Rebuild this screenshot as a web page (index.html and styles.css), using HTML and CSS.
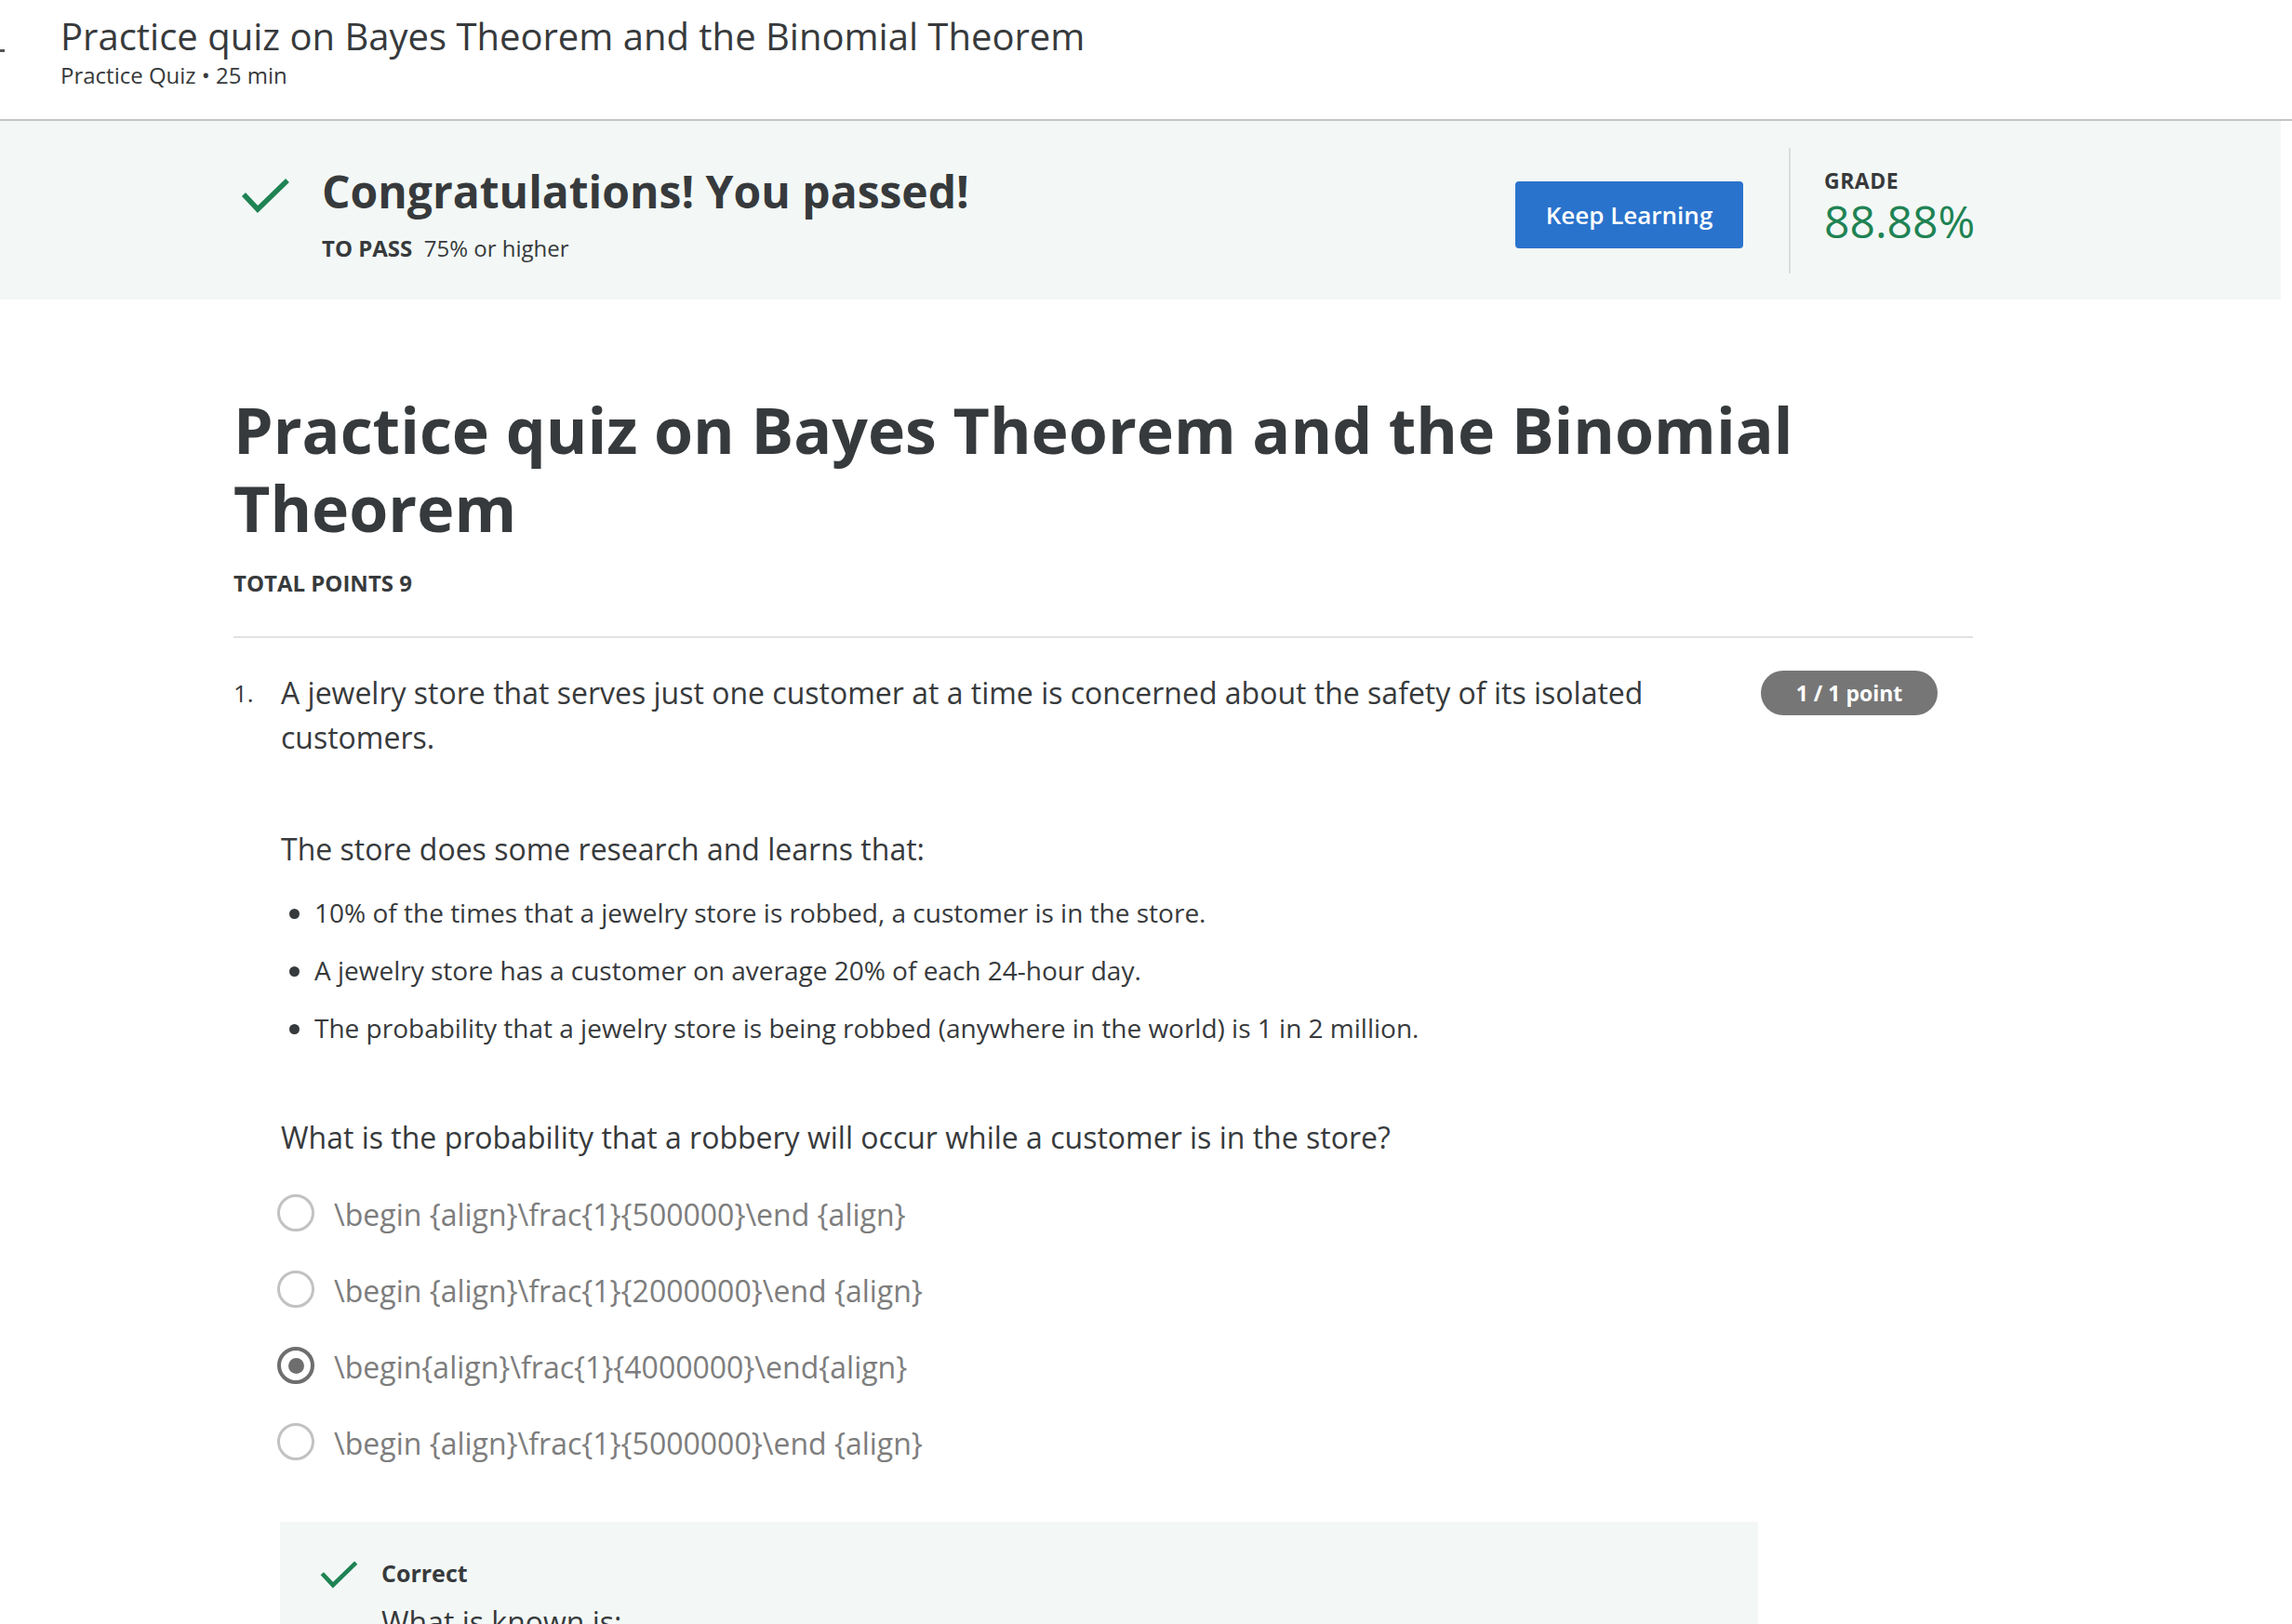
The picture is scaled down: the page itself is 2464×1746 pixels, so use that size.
FILE: index.html
```html
<!DOCTYPE html>
<html lang="en">
<head>
<meta charset="utf-8">
<title>Practice quiz on Bayes Theorem and the Binomial Theorem</title>
<link rel="stylesheet" href="styles.css">
</head>
<body>
<header class="topbar">
  <span class="back-mark"></span>
  <div class="topbar-text">
    <div class="topbar-title">Practice quiz on Bayes Theorem and the Binomial Theorem</div>
    <div class="topbar-sub">Practice Quiz • 25 min</div>
  </div>
</header>

<section class="banner">
  <div class="banner-inner">
    <svg class="banner-check" viewBox="0 0 53 40" width="53" height="40" aria-hidden="true">
      <polyline points="3,19 18,35 50,4" fill="none" stroke="#1f8354" stroke-width="5.5"/>
    </svg>
    <div class="banner-text">
      <div class="banner-title">Congratulations! You passed!</div>
      <div class="banner-pass"><b>TO PASS</b>&nbsp; 75% or higher</div>
    </div>
    <button class="btn-keep">Keep Learning</button>
    <div class="grade">
      <div class="grade-label">GRADE</div>
      <div class="grade-value">88.88%</div>
    </div>
  </div>
</section>

<main class="content">
  <h1 class="quiz-title">Practice quiz on Bayes Theorem and the Binomial Theorem</h1>
  <div class="total-points">TOTAL POINTS 9</div>
  <hr class="rule">

  <div class="question">
    <div class="q-num">1.</div>
    <div class="q-body">
      <div class="q-row">
        <p class="q-text">A jewelry store that serves just one customer at a time is concerned about the safety of its isolated customers.</p>
        <span class="badge">1 / 1 point</span>
      </div>
      <p class="q-para">The store does some research and learns that:</p>
      <ul class="facts">
        <li>10% of the times that a jewelry store is robbed, a customer is in the store.</li>
        <li>A jewelry store has a customer on average 20% of each 24-hour day.</li>
        <li>The probability that a jewelry store is being robbed (anywhere in the world) is 1 in 2 million.</li>
      </ul>
      <p class="q-ask">What is the probability that a robbery will occur while a customer is in the store?</p>
      <div class="options">
        <div class="option"><span class="radio"></span><span class="opt-text">\begin {align}\frac{1}{500000}\end {align}</span></div>
        <div class="option"><span class="radio"></span><span class="opt-text">\begin {align}\frac{1}{2000000}\end {align}</span></div>
        <div class="option"><span class="radio radio-on"></span><span class="opt-text">\begin{align}\frac{1}{4000000}\end{align}</span></div>
        <div class="option"><span class="radio"></span><span class="opt-text">\begin {align}\frac{1}{5000000}\end {align}</span></div>
      </div>
      <div class="feedback">
        <svg class="fb-check" viewBox="0 0 53 40" width="41" height="31" aria-hidden="true">
          <polyline points="3,19 18,35 50,4" fill="none" stroke="#1f8354" stroke-width="6"/>
        </svg>
        <div class="fb-body">
          <div class="fb-title">Correct</div>
          <p class="fb-text">What is known is:</p>
        </div>
      </div>
    </div>
  </div>
</main>
</body>
</html>
```

FILE: styles.css
```css
* { box-sizing: border-box; }
html, body { margin: 0; padding: 0; }
body {
  font-family: "Open Sans", "Liberation Sans", sans-serif;
  color: #373a3c;
  background: #ffffff;
  overflow: hidden;
}

/* top bar */
.topbar {
  display: flex;
  align-items: flex-start;
  height: 130px;
  border-bottom: 2px solid #c4c4c4;
}
.back-mark {
  width: 5px;
  height: 3px;
  margin-top: 53px;
  margin-right: 60px;
  background: #555;
}
.topbar-text { padding-top: 15px; }
.topbar-title {
  font-size: 40px;
  line-height: 48px;
  color: #373a3c;
}
.topbar-sub {
  margin-top: 2px;
  font-size: 24px;
  line-height: 32px;
  color: #373a3c;
}

/* banner */
.banner {
  width: 2452px;
  height: 192px;
  background: #f3f8f6;
}
.banner-inner {
  display: flex;
  align-items: flex-start;
  padding-left: 259px;
  height: 100%;
}
.banner-check { margin-top: 60px; flex: none; }
.banner-text {
  margin-left: 34px;
  margin-top: 46px;
  width: 1283px;
  flex: none;
}
.banner-title {
  font-size: 48px;
  line-height: 60px;
  font-weight: 700;
}
.banner-pass {
  margin-top: 15px;
  font-size: 24px;
  line-height: 32px;
}
.banner-pass b { font-weight: 700; }
.btn-keep {
  margin-top: 65px;
  width: 245px;
  height: 72px;
  border: 0;
  border-radius: 4px;
  background: #2a73cc;
  color: #fff;
  font-family: inherit;
  font-size: 26px;
  font-weight: 600;
  padding: 0;
  flex: none;
}
.grade {
  margin-left: 49px;
  margin-top: 29px;
  height: 135px;
  border-left: 2px solid #dcdcdc;
  padding-left: 36px;
  padding-top: 19px;
}
.grade-label {
  font-size: 23px;
  line-height: 32px;
  font-weight: 700;
  letter-spacing: 0.5px;
}
.grade-value {
  font-size: 48px;
  line-height: 56px;
  color: #1f8354;
}

/* main */
.content {
  margin-left: 251px;
  width: 1870px;
  padding-top: 98px;
}
.quiz-title {
  margin: 0;
  font-size: 68px;
  line-height: 84px;
  font-weight: 700;
  width: 1800px;
}
.total-points {
  margin-top: 23px;
  font-size: 24px;
  line-height: 32px;
  font-weight: 700;
}
.rule {
  margin: 41px 0 0;
  border: 0;
  border-top: 2px solid #e1e1e1;
  height: 0;
}

.question {
  display: flex;
  align-items: flex-start;
  padding-top: 35px;
}
.q-num {
  width: 51px;
  flex: none;
  font-size: 26px;
  line-height: 40px;
  padding-top: 4px;
}
.q-body { flex: 1; }
.q-row {
  display: flex;
  align-items: flex-start;
}
.q-text {
  margin: 0;
  flex: 1;
  padding-right: 30px;
  font-size: 32px;
  line-height: 48px;
}
.badge {
  margin-top: 0;
  margin-right: 38px;
  width: 190px;
  height: 48px;
  border-radius: 24px;
  background: #767676;
  color: #fff;
  font-size: 23px;
  font-weight: 700;
  display: flex;
  align-items: center;
  justify-content: center;
  flex: none;
}
.q-para {
  margin: 73px 0 0;
  font-size: 32px;
  line-height: 46px;
}
.facts {
  list-style: none;
  margin: 25px 0 0;
  padding: 0;
}
.facts li {
  position: relative;
  padding-left: 36px;
  font-size: 28px;
  line-height: 40px;
  margin-bottom: 22px;
}
.facts li::before {
  content: "";
  position: absolute;
  left: 9px;
  top: 16px;
  width: 11px;
  height: 11px;
  border-radius: 50%;
  background: #373a3c;
}
.q-ask {
  margin: 75px 0 0;
  font-size: 32px;
  line-height: 46px;
}
.options { margin-top: 34px; }
.option {
  display: flex;
  align-items: center;
  height: 48px;
  margin-bottom: 34px;
}
.radio {
  width: 40px;
  height: 40px;
  border: 3px solid #c2c2c2;
  border-radius: 50%;
  margin-left: -4px;
  flex: none;
  display: flex;
  align-items: center;
  justify-content: center;
}
.radio-on { border: 4px solid #6e6e6e; }
.radio-on::after {
  content: "";
  width: 17px;
  height: 17px;
  border-radius: 50%;
  background: #6e6e6e;
}
.opt-text {
  margin-left: 21px;
  font-size: 32px;
  line-height: 48px;
  color: #7d7d7d;
  padding-top: 4px;
}
.feedback {
  margin-top: 62px;
  width: 1589px;
  margin-left: -1px;
  background: #f3f8f6;
  display: flex;
  align-items: flex-start;
  padding: 41px 0 40px 43px;
}
.fb-check { flex: none; }
.fb-body { margin-left: 25px; }
.fb-title {
  font-size: 25px;
  line-height: 32px;
  font-weight: 700;
  margin-top: -2px;
}
.fb-text {
  margin: 14px 0 0;
  font-size: 32px;
  line-height: 46px;
}
```
